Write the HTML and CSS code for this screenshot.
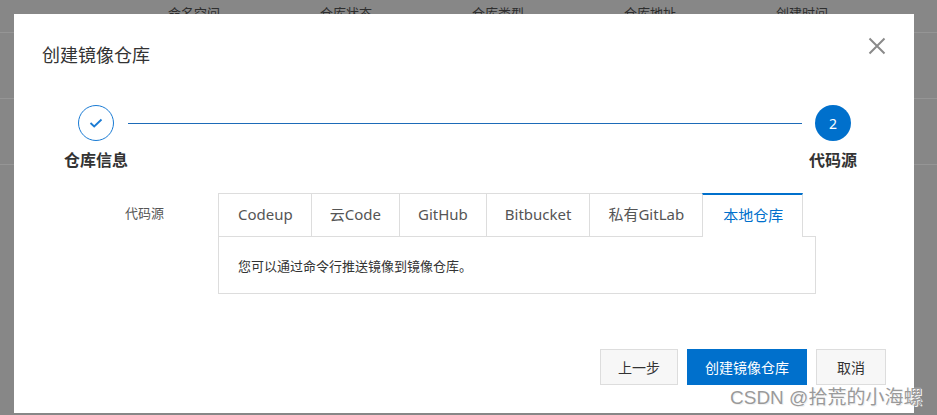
FILE: index.html
```html
<!DOCTYPE html>
<html lang="zh-CN">
<head>
<meta charset="utf-8">
<title>创建镜像仓库</title>
<link rel="stylesheet" href="styles.css">
</head>
<body>
<div class="page">
  <div class="table-head">
    <span class="th">命名空间</span>
    <span class="th">仓库状态</span>
    <span class="th">仓库类型</span>
    <span class="th">仓库地址</span>
    <span class="th">创建时间</span>
  </div>
  <div class="table-row"></div>
  <div class="table-row"></div>
</div>

<div class="modal">
  <div class="modal-header">
    <h1 class="modal-title">创建镜像仓库</h1>
    <button class="close" aria-label="关闭">
      <svg width="18" height="18" viewBox="0 0 18 18"><path d="M1.5 1.5 L16.5 16.5 M16.5 1.5 L1.5 16.5" stroke="#8a8a8a" stroke-width="2" fill="none"/></svg>
    </button>
  </div>

  <div class="steps">
    <div class="step step-first">
      <div class="step-icon done">
        <svg width="14" height="10" viewBox="0 0 14 10"><path d="M1.5 5 L5.2 8.5 L12.5 1.5" stroke="#1a7bd4" stroke-width="1.8" fill="none"/></svg>
      </div>
      <div class="step-label">仓库信息</div>
    </div>
    <div class="step-line"></div>
    <div class="step step-last">
      <div class="step-icon current">2</div>
      <div class="step-label">代码源</div>
    </div>
  </div>

  <div class="form-row">
    <div class="form-label">代码源</div>
    <div class="source">
      <div class="tabs">
        <div class="tab">Codeup</div>
        <div class="tab">云Code</div>
        <div class="tab">GitHub</div>
        <div class="tab">Bitbucket</div>
        <div class="tab">私有GitLab</div>
        <div class="tab active">本地仓库</div>
      </div>
      <div class="panel">您可以通过命令行推送镜像到镜像仓库。</div>
    </div>
  </div>

  <div class="footer">
    <button class="btn">上一步</button>
    <button class="btn primary">创建镜像仓库</button>
    <button class="btn">取消</button>
  </div>
</div>

<div class="watermark">CSDN @拾荒的小海螺</div>
</body>
</html>
```

FILE: styles.css
```css
* { box-sizing: border-box; }

html, body {
  margin: 0;
  padding: 0;
}

body {
  width: 937px;
  height: 415px;
  overflow: hidden;
  background: #878787;
  font-family: "Noto Sans", "Noto Sans CJK SC", sans-serif;
  color: #333;
  position: relative;
}

/* background page under the overlay */
.page {
  width: 937px;
}

.table-head {
  height: 33px;
  display: flex;
  padding-left: 168px;
  gap: 98px;
  border-bottom: 1px solid #959595;
}

.th {
  font-size: 13px;
  line-height: 26px;
  color: #2e2e2e;
  width: 54px;
  white-space: nowrap;
}

.table-row {
  height: 66px;
  border-bottom: 1px solid #959595;
}

/* modal */
.modal {
  position: absolute;
  left: 14px;
  top: 14px;
  width: 900px;
  height: 399px;
  background: #fff;
  padding: 29px 28px 0 28px;
}

.modal-header {
  display: flex;
  justify-content: space-between;
  align-items: flex-start;
}

.modal-title {
  margin: 0;
  font-size: 18px;
  line-height: 24px;
  font-weight: normal;
  color: #333;
}

.close {
  border: none;
  background: none;
  padding: 0;
  margin: -6px 0 0 0;
  width: 18px;
  height: 18px;
  display: flex;
}

.steps {
  display: flex;
  align-items: flex-start;
  margin-top: 38px;
  padding-left: 22px;
  padding-right: 29px;
}

.step {
  display: flex;
  flex-direction: column;
  align-items: center;
}

.step-icon {
  width: 36px;
  height: 36px;
  border-radius: 50%;
  display: flex;
  align-items: center;
  justify-content: center;
}

.step-icon.done {
  border: 1px solid #1a7bd4;
  background: #fff;
}

.step-icon.current {
  background: #0070cc;
  color: #fff;
  font-size: 14px;
}

.step-label {
  margin-top: 8px;
  font-size: 16px;
  line-height: 22px;
  font-weight: bold;
  color: #333;
  white-space: nowrap;
}

.step-line {
  flex: 1;
  height: 1px;
  background: #1d6bb8;
  margin: 18px 7px 0 0;
}

/* form */
.form-row {
  display: flex;
  margin-top: 22px;
}

.form-label {
  width: 176px;
  padding-left: 83px;
  padding-top: 10px;
  font-size: 13px;
  line-height: 20px;
  color: #555;
}

.source {
  width: 598px;
}

.tabs {
  display: flex;
}

.tab {
  height: 43px;
  padding: 0 18px;
  border: 1px solid #ddd;
  border-bottom: none;
  margin-left: -1px;
  font-size: 15px;
  line-height: 41px;
  color: #555;
  background: #fff;
  white-space: nowrap;
}

.tab:first-child {
  margin-left: 0;
  padding-left: 19px;
}

.tab.active {
  height: 44px;
  margin-bottom: -1px;
  padding: 0 19px 0 20px;
  border-top: 2px solid #0070cc;
  color: #0070cc;
  line-height: 40px;
  position: relative;
  z-index: 1;
}

.panel {
  border: 1px solid #ddd;
  padding: 19px 19px 17px;
  font-size: 13px;
  line-height: 20px;
  color: #333;
}

/* footer */
.footer {
  display: flex;
  justify-content: flex-end;
  gap: 9px;
  margin-top: 55px;
}

.btn {
  height: 36px;
  min-width: 70px;
  padding: 0 17px;
  border: 1px solid #ddd;
  background: #f7f7f7;
  color: #333;
  font-family: "Noto Sans", "Noto Sans CJK SC", sans-serif;
  font-size: 14px;
}

.btn.primary {
  background: #0070cc;
  border-color: #0070cc;
  color: #fff;
}

.watermark {
  position: absolute;
  left: 730px;
  top: 386px;
  font-family: "Liberation Sans", "Noto Sans CJK SC", sans-serif;
  font-size: 19px;
  line-height: 24px;
  color: #9a9a9a;
  text-shadow: 0 0 1px #fff, 1px 1px 0 #f0f0f0;
  white-space: nowrap;
}
```
